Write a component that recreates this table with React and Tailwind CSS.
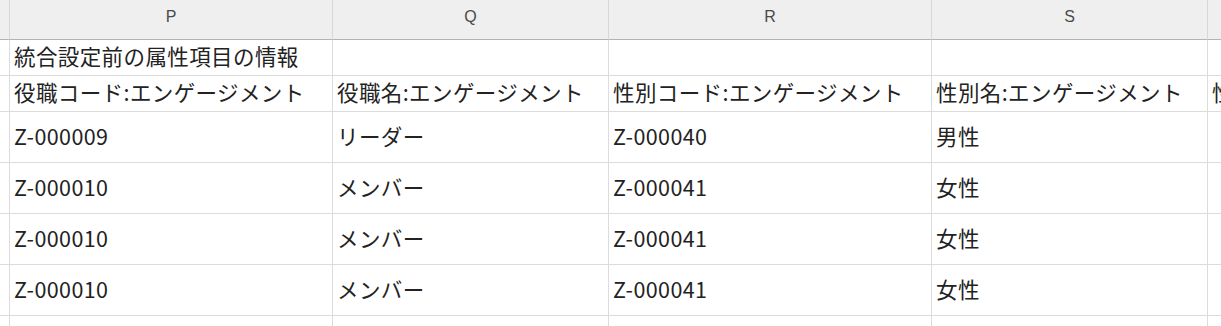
import React from "react";

const cols = ["", "P", "Q", "R", "S", ""];

const rows = [
  ["", "統合設定前の属性項目の情報", "", "", "", ""],
  ["", "役職コード:エンゲージメント", "役職名:エンゲージメント", "性別コード:エンゲージメント", "性別名:エンゲージメント", "性"],
  ["", "Z-000009", "リーダー", "Z-000040", "男性", ""],
  ["", "Z-000010", "メンバー", "Z-000041", "女性", ""],
  ["", "Z-000010", "メンバー", "Z-000041", "女性", ""],
  ["", "Z-000010", "メンバー", "Z-000041", "女性", ""],
  ["", "", "", "", "", ""],
];

export default function App() {
  return (
    <div className="w-[1221px] h-[326px] overflow-hidden bg-white">
      <div
        className="grid grid-cols-[10px_323px_276px_323px_276px_100px] grid-rows-[40px_36px_36px_51px_51px_51px_51px_51px] text-[#222222]"
        style={{ fontFamily: '"Noto Sans CJK JP", "Noto Sans", sans-serif' }}
      >
        {cols.map((c, i) => (
          <div
            key={"h" + i}
            className="flex items-center justify-center bg-[#efefef] border-r border-b border-r-[#d8d8d8] border-b-[#b3b3b3] text-[16px] text-[#4a4a4a] font-['Liberation_Sans',sans-serif] pb-[6px]"
          >
            {c}
          </div>
        ))}
        {rows.map((r, ri) =>
          r.map((v, ci) => (
            <div
              key={ri + "-" + ci}
              className="flex items-center border-r border-b border-[#dcdcdc] pl-[4px] pb-[2px] text-[21.5px] whitespace-nowrap overflow-hidden tracking-[0.4px]"
            >
              {v}
            </div>
          ))
        )}
      </div>
    </div>
  );
}
